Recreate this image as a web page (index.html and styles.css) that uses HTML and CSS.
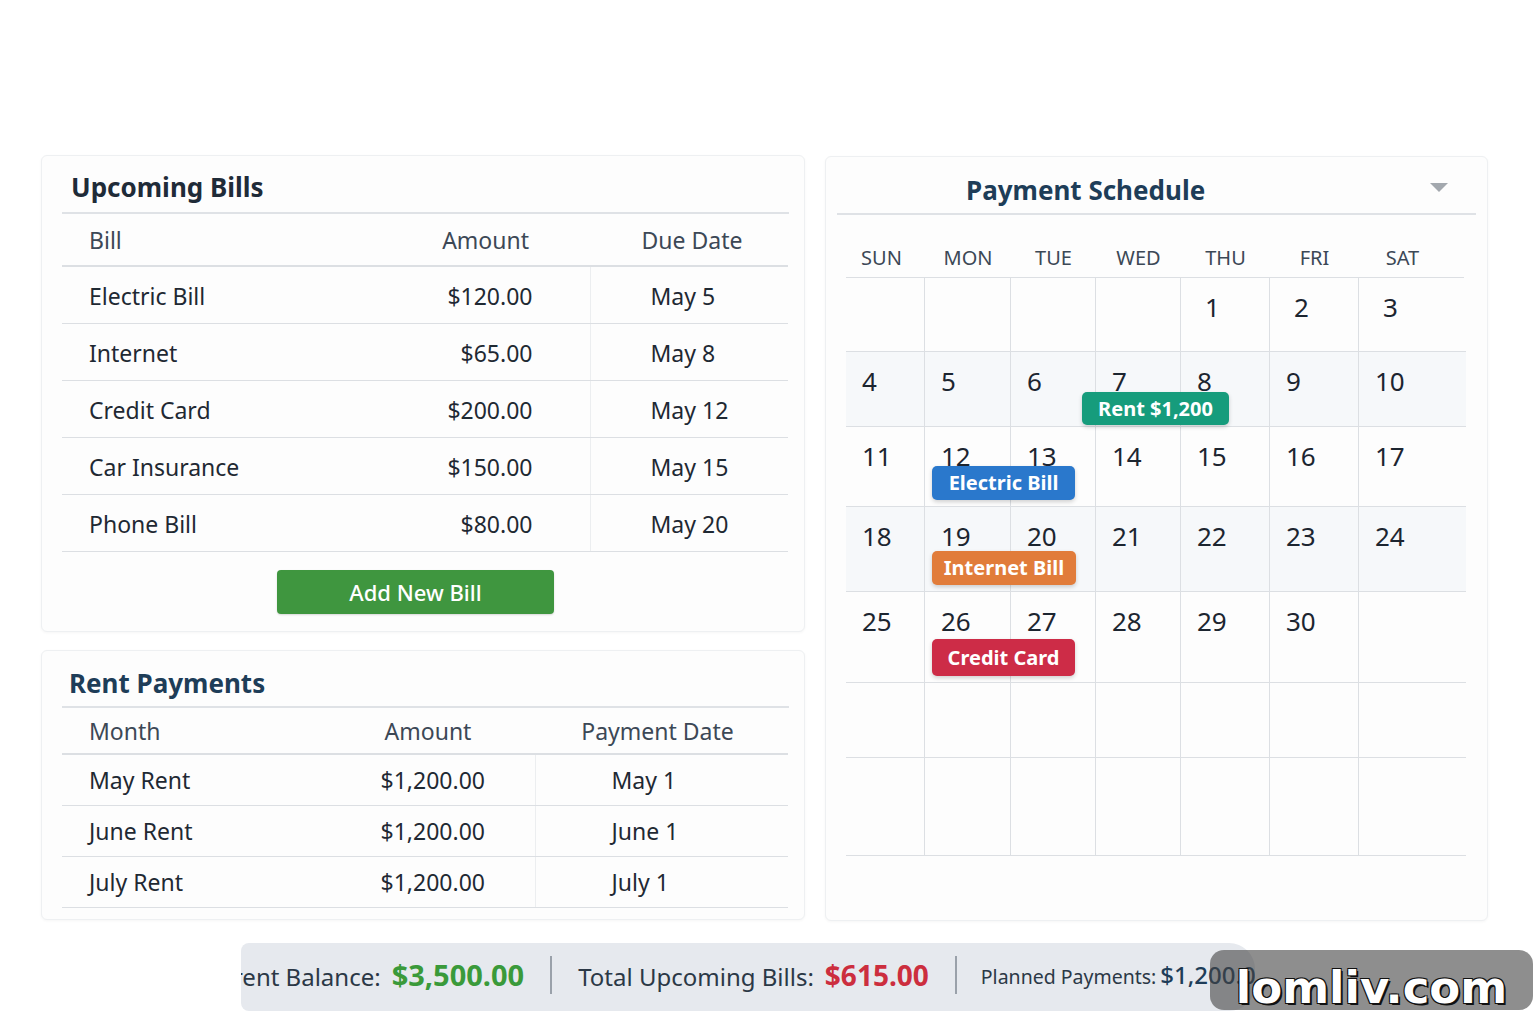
FILE: index.html
```html
<!DOCTYPE html>
<html lang="en">
<head>
    <meta charset="UTF-8">
    <meta name="viewport" content="width=device-width, initial-scale=1.0">
    <title>Bills &amp; Rent Planner</title>
    <link rel="stylesheet" href="styles.css">
</head>
<body>
    <div class="page">
        <div class="dashboard">
            <div class="left-col">
                <section class="card bills-card">
                    <h2 class="card-title">Upcoming Bills</h2>
                    <table class="data-table bills-table">
                        <thead>
                            <tr>
                                <th class="col-name">Bill</th>
                                <th class="col-amount">Amount</th>
                                <th class="col-date">Due Date</th>
                            </tr>
                        </thead>
                        <tbody>
                            <tr><td>Electric Bill</td><td class="col-amount">$120.00</td><td class="col-date">May 5</td></tr>
                            <tr><td>Internet</td><td class="col-amount">$65.00</td><td class="col-date">May 8</td></tr>
                            <tr><td>Credit Card</td><td class="col-amount">$200.00</td><td class="col-date">May 12</td></tr>
                            <tr><td>Car Insurance</td><td class="col-amount">$150.00</td><td class="col-date">May 15</td></tr>
                            <tr><td>Phone Bill</td><td class="col-amount">$80.00</td><td class="col-date">May 20</td></tr>
                        </tbody>
                    </table>
                    <div class="btn-row">
                        <button class="add-btn">Add New Bill</button>
                    </div>
                </section>

                <section class="card rent-card">
                    <h2 class="card-title">Rent Payments</h2>
                    <table class="data-table rent-table">
                        <thead>
                            <tr>
                                <th class="col-name">Month</th>
                                <th class="col-amount">Amount</th>
                                <th class="col-date">Payment Date</th>
                            </tr>
                        </thead>
                        <tbody>
                            <tr><td>May Rent</td><td class="col-amount">$1,200.00</td><td class="col-date">May 1</td></tr>
                            <tr><td>June Rent</td><td class="col-amount">$1,200.00</td><td class="col-date">June 1</td></tr>
                            <tr><td>July Rent</td><td class="col-amount">$1,200.00</td><td class="col-date">July 1</td></tr>
                        </tbody>
                    </table>
                </section>
            </div>

            <section class="card schedule-card">
                <div class="schedule-head">
                    <h2>Payment Schedule</h2>
                    <span class="caret"></span>
                </div>
                <div class="weekdays">
                    <span>SUN</span><span>MON</span><span>TUE</span><span>WED</span><span>THU</span><span>FRI</span><span>SAT</span>
                </div>
                <div class="calendar">
                    <div class="day"></div><div class="day"></div><div class="day"></div><div class="day"></div>
                    <div class="day">1</div><div class="day">2</div><div class="day">3</div>

                    <div class="day shade">4</div><div class="day shade">5</div><div class="day shade">6</div><div class="day shade">7</div>
                    <div class="day shade">8</div><div class="day shade">9</div><div class="day shade">10</div>

                    <div class="day">11</div><div class="day">12</div><div class="day">13</div><div class="day">14</div>
                    <div class="day">15</div><div class="day">16</div><div class="day">17</div>

                    <div class="day shade">18</div><div class="day shade">19</div><div class="day shade">20</div><div class="day shade">21</div>
                    <div class="day shade">22</div><div class="day shade">23</div><div class="day shade">24</div>

                    <div class="day">25</div><div class="day">26</div><div class="day">27</div><div class="day">28</div>
                    <div class="day">29</div><div class="day">30</div><div class="day"></div>

                    <div class="day"></div><div class="day"></div><div class="day"></div><div class="day"></div>
                    <div class="day"></div><div class="day"></div><div class="day"></div>

                    <div class="day"></div><div class="day"></div><div class="day"></div><div class="day"></div>
                    <div class="day"></div><div class="day"></div><div class="day"></div>

                    <!-- events sit over the day cells -->
                    <span class="event ev-rent">Rent $1,200</span>
                    <span class="event ev-electric">Electric Bill</span>
                    <span class="event ev-internet">Internet Bill</span>
                    <span class="event ev-credit">Credit Card</span>
                </div>
            </section>
        </div>

        <div class="summary-bar">
            <div class="stat first">
                <span class="stat-label">Current Balance:</span>
                <span class="stat-value green">$3,500.00</span>
            </div>
            <span class="divider"></span>
            <div class="stat">
                <span class="stat-label">Total Upcoming Bills:</span>
                <span class="stat-value red">$615.00</span>
            </div>
            <span class="divider"></span>
            <div class="stat small">
                <span class="stat-label">Planned Payments:</span>
                <span class="stat-value blue">$1,200.00</span>
            </div>
        </div>

        <div class="watermark">lomliv.com</div>
    </div>
</body>
</html>
```

FILE: styles.css
```css
html, body {
    margin: 0;
    padding: 0;
    background-color: #ffffff;
}
body {
    font-family: "Noto Sans", "Open Sans", sans-serif;
    color: #1f2933;
    width: 1536px;
    height: 1024px;
    overflow: hidden;
}
.page {
    position: relative;
    padding: 155px 0 0 41px;
    height: 1024px;
    box-sizing: border-box;
}
.dashboard {
    display: flex;
    gap: 20px;
    align-items: flex-start;
}
.left-col {
    width: 764px;
    display: flex;
    flex-direction: column;
    gap: 18px;
}
.card {
    background-color: #fdfdfd;
    border: 1px solid #eef0f2;
    border-radius: 6px;
    box-shadow: 0 1px 3px rgba(0,0,0,0.04);
    box-sizing: border-box;
}
.bills-card {
    height: 477px;
    padding: 0 15px 0 20px;
}
.rent-card {
    height: 270px;
    padding: 0 15px 0 20px;
}
.card-title {
    margin: 0;
    padding: 13px 0 7px 9px;
    line-height: 36px;
    font-size: 26px;
    font-weight: 700;
    color: #1f2b38;
    border-bottom: 2px solid #dfe2e6;
}
.rent-card .card-title {
    padding: 14px 0 5px 7px;
    color: #1e3d58;
}

/* tables */
.data-table {
    width: 726px;
    border-collapse: collapse;
    font-size: 23px;
}
.data-table th {
    font-weight: 400;
    color: #3c4856;
    height: 51px;
    border-bottom: 2px solid #dcdfe3;
    text-align: left;
    padding: 0;
}
.data-table td {
    height: 57px;
    border-bottom: 1px solid #dcdfe3;
    padding: 0;
    padding-top: 3px;
    box-sizing: border-box;
    color: #1f2933;
}
.data-table .col-name {
    padding-left: 27px;
}
.data-table td:first-child {
    padding-left: 27px;
}
.bills-table th:nth-child(1), .bills-table td:nth-child(1) { width: 312px; }
.bills-table th:nth-child(2), .bills-table td:nth-child(2) {
    width: 189px;
    text-align: right;
    padding-right: 57px;
    box-sizing: border-box;
}
.bills-table th:nth-child(2) { padding-right: 61px; }
.bills-table td:nth-child(3) {
    border-left: 1px solid #eceef0;
    padding-left: 60px;
}
.bills-table th:nth-child(3) {
    text-align: center;
    padding-left: 6px;
}
.rent-table th {
    height: 45px;
}
.rent-table td {
    height: 51px;
    padding-top: 1px;
}
.rent-table th:nth-child(1), .rent-table td:nth-child(1) { width: 214px; }
.rent-table th:nth-child(2), .rent-table td:nth-child(2) {
    width: 232px;
    text-align: center;
    padding-left: 28px;
    box-sizing: border-box;
}
.rent-table th:nth-child(2) { padding-left: 18px; }
.rent-table td:nth-child(3) {
    border-left: 1px solid #eceef0;
    padding-left: 76px;
}
.rent-table th:nth-child(3) {
    text-align: center;
    padding-right: 8px;
}

.btn-row {
    display: flex;
    justify-content: center;
    padding: 18px 20px 0 0;
}
.add-btn {
    width: 277px;
    height: 44px;
    border: none;
    border-radius: 4px;
    background-color: #3f963f;
    color: #ffffff;
    font-family: inherit;
    font-size: 22px;
    font-weight: 500;
    cursor: pointer;
    box-shadow: 0 1px 2px rgba(0,0,0,0.15);
}
.add-btn:hover {
    background-color: #37883a;
}

/* schedule */
.schedule-card {
    width: 663px;
    height: 765px;
    padding: 0 11px;
    margin-top: 1px;
}
.schedule-head {
    display: flex;
    align-items: center;
    justify-content: space-between;
    padding: 14px 28px 4px 129px;
    border-bottom: 2px solid #dfe2e6;
}
.schedule-head h2 {
    margin: 0;
    font-size: 26px;
    line-height: 38px;
    font-weight: 700;
    color: #1e3d58;
}
.caret {
    width: 0;
    height: 0;
    border-left: 9px solid transparent;
    border-right: 9px solid transparent;
    border-top: 9px solid #a3a8ae;
    margin-top: -6px;
}
.weekdays {
    display: grid;
    grid-template-columns: 79px 86px 85px 85px 89px 89px 107px;
    margin: 0 12px 0 9px;
    padding: 31px 0 7px;
    border-bottom: 1px solid #dcdfe3;
    font-size: 20px;
    line-height: 24px;
    color: #3c4856;
    text-align: center;
}
.weekdays span:first-child {
    padding-right: 8px;
}
.weekdays span:last-child {
    padding-right: 20px;
}
.calendar {
    position: relative;
    display: grid;
    grid-template-columns: 79px 86px 85px 85px 89px 89px 107px;
    grid-template-rows: 74px 75px 80px 85px 91px 75px 98px;
    margin: 0 12px 0 9px;
}
.day {
    border-right: 1px solid #dcdfe3;
    border-bottom: 1px solid #dcdfe3;
    padding: 14px 0 0 16px;
    font-size: 26px;
    line-height: 30px;
    color: #1c2530;
    box-sizing: border-box;
}
.day:nth-child(7n) {
    border-right: none;
}
.day:nth-child(-n+7) {
    padding-left: 24px;
}
.day.shade {
    background-color: #f6f8fa;
}
.event {
    position: absolute;
    height: 34px;
    line-height: 34px;
    border-radius: 5px;
    color: #ffffff;
    font-size: 20px;
    font-weight: 700;
    text-align: center;
    box-shadow: 0 2px 4px rgba(0,0,0,0.18);
}
.ev-rent {
    left: 236px;
    top: 114px;
    width: 147px;
    height: 33px;
    line-height: 33px;
    background-color: #169c7c;
}
.ev-electric {
    left: 86px;
    top: 188px;
    width: 143px;
    background-color: #2a78cc;
}
.ev-internet {
    left: 86px;
    top: 273px;
    width: 144px;
    background-color: #e17c3a;
}
.ev-credit {
    left: 86px;
    top: 361px;
    width: 143px;
    height: 37px;
    line-height: 37px;
    background-color: #cd2c47;
}

/* summary bar */
.summary-bar {
    margin: 22px 0 0 200px;
    width: 1014px;
    height: 68px;
    padding-bottom: 5px;
    box-sizing: border-box;
    background-color: #e6e9ee;
    border-radius: 8px 26px 26px 8px;
    display: flex;
    align-items: center;
    overflow: hidden;
    white-space: nowrap;
}
.stat {
    display: flex;
    align-items: baseline;
    gap: 11px;
    flex-shrink: 0;
}
.stat.first {
    margin-left: -48px;
}
.stat-label {
    font-size: 24px;
    color: #2b3846;
}
.stat-value {
    font-size: 29px;
    font-weight: 700;
}
.stat-value.red {
    font-size: 28px;
}
.stat.small .stat-label {
    font-size: 19.5px;
}
.stat.small {
    gap: 4px;
}
.stat.small .stat-value {
    font-size: 24px;
    font-weight: 500;
}
.green { color: #3a9a3a; }
.red { color: #cc2e3e; }
.blue { color: #1e3d58; }
.divider {
    flex-shrink: 0;
    width: 2px;
    height: 38px;
    background-color: #9aa1aa;
    margin: 0 26px;
}
.divider + .stat.small {
    margin-left: -2px;
}
.watermark {
    position: absolute;
    left: 1210px;
    top: 950px;
    width: 323px;
    height: 60px;
    border-radius: 14px;
    background-color: rgba(67,67,67,0.6);
    color: #ffffff;
    font-family: "DejaVu Sans", sans-serif;
    font-size: 45px;
    font-weight: 700;
    line-height: 76px;
    text-align: center;
    overflow: hidden;
    text-shadow: 2px 2px 0 #111, -1px -1px 0 #111, 1px -1px 0 #111, -1px 1px 0 #111;
}
```
